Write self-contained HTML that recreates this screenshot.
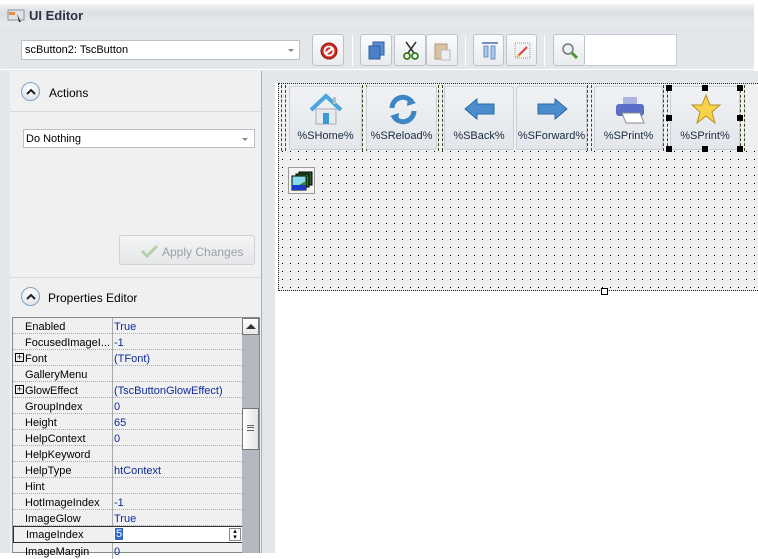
<!DOCTYPE html>
<html><head><meta charset="utf-8"><style>
*{box-sizing:border-box;margin:0;padding:0}
body{width:758px;height:558px;background:#fff;font-family:"Liberation Sans",Tahoma,sans-serif;font-size:11px;position:relative;overflow:hidden;color:#000}
.a{position:absolute}
.tb{left:0;top:4px;width:754px;height:549px;background:#e4e7ea}
.title{left:0;top:4px;width:754px;height:22px;background:linear-gradient(#f2f3f5,#dcdfe4 40%,#e8eaed);}
.combo{background:#fff;border:1px solid #b9c0c8}
.btn{border:1px solid #bcc3cb;border-radius:3px;background:linear-gradient(#fbfbfc,#e9ebee);}
.sep{width:1px;background:#c8cdd3;border-right:1px solid #fff}
.arr{width:0;height:0;border-left:3px solid transparent;border-right:3px solid transparent;border-top:3px solid #888}
.circ{width:19px;height:19px;border-radius:50%;border:1px solid #7fa3c6;background:radial-gradient(circle at 50% 30%,#fff,#d9dde2)}
.tbtn{top:86px;height:64px;border:1px solid #c9cfd6;border-radius:2px;background:linear-gradient(#f0f2f5,#e3e6ea);font-size:11px;text-align:center;color:#1a2a40}
.tbtn span{position:absolute;left:0;right:0;top:43px}
.dash{top:85px;width:5px;height:66px;border-left:1px dashed #3a4a20;border-right:1px dashed #3a4a20}
.row{left:13px;width:229px;height:16px;border-bottom:1px dotted #a8a8a8;font-size:11px}
.row .n{position:absolute;left:12px;top:3px}
.row .v{position:absolute;left:101px;top:3px;color:#0c2a9a}
.row .c{position:absolute;left:99px;top:0;width:1px;height:16px;background:#a8a8a8}
.plus{position:absolute;left:2px;top:3px;width:9px;height:9px;border:1px solid #000;font-size:9px;line-height:7px;text-align:center}
.h{width:6px;height:6px;background:#000}
</style></head><body>
<div class="a tb"></div>
<div class="a title"></div>
<svg class="a" style="left:7px;top:8px" width="20" height="16"><rect x="1" y="2" width="16" height="10" fill="#dfe3e8" stroke="#8a9099"/><rect x="2" y="4" width="6" height="3" fill="#f28a3a"/><path d="M10 6 L14 14 L12 14 Z" fill="#333"/></svg>
<div class="a" style="left:29px;top:8px;font-weight:bold;font-size:13px;color:#2b3340">UI Editor</div>

<div class="a combo" style="left:21px;top:40px;width:279px;height:20px"><div class="a" style="left:3px;top:3px">scButton2: TscButton</div><div class="a arr" style="left:266px;top:8px"></div></div>

<div class="a btn" style="left:312px;top:34px;width:32px;height:32px"><svg class="a" style="left:6px;top:6px" width="20" height="20"><circle cx="10" cy="10" r="8" fill="#d42b1e" stroke="#8a1a10"/><path d="M6 13 L14 7" stroke="#fff" stroke-width="2.5"/><circle cx="10" cy="10" r="4.5" fill="none" stroke="#fff" stroke-width="1.8"/></svg></div>
<div class="a sep" style="left:352px;top:36px;height:30px"></div>
<div class="a btn" style="left:360px;top:34px;width:32px;height:32px"><svg class="a" style="left:7px;top:6px" width="20" height="20"><rect x="5" y="1" width="11" height="13" fill="#5a8fd0" stroke="#2d5f9e"/><rect x="1" y="5" width="11" height="13" fill="#4a80c6" stroke="#2d5f9e"/></svg></div>
<div class="a btn" style="left:394px;top:34px;width:32px;height:32px"><svg class="a" style="left:6px;top:6px" width="20" height="20"><path d="M5 1 L13 12 M15 1 L7 12" stroke="#333" stroke-width="1.5"/><circle cx="6" cy="15" r="3" fill="none" stroke="#3a7d1a" stroke-width="1.8"/><circle cx="14" cy="15" r="3" fill="none" stroke="#3a7d1a" stroke-width="1.8"/></svg></div>
<div class="a btn" style="left:426px;top:34px;width:32px;height:32px"><svg class="a" style="left:6px;top:6px" width="20" height="20"><rect x="2" y="3" width="12" height="15" fill="#d8c4a4" stroke="#b09a7a"/><rect x="8" y="9" width="9" height="10" fill="#eee" stroke="#bbb"/></svg></div>
<div class="a sep" style="left:465px;top:36px;height:30px"></div>
<div class="a btn" style="left:473px;top:34px;width:31px;height:32px"><svg class="a" style="left:6px;top:6px" width="20" height="20"><path d="M2 2 H18" stroke="#4a6fb0" stroke-width="1.5"/><rect x="4" y="5" width="4" height="11" fill="#a8c8ec" stroke="#6a90c0"/><rect x="11" y="5" width="4" height="13" fill="#a8c8ec" stroke="#6a90c0"/></svg></div>
<div class="a btn" style="left:506px;top:34px;width:31px;height:32px"><svg class="a" style="left:6px;top:6px" width="20" height="20"><rect x="2" y="2" width="15" height="15" fill="#f2f2f2" stroke="#999" stroke-dasharray="1,1"/><path d="M5 15 L14 6" stroke="#e04040" stroke-width="2"/><path d="M4 16 L6 14" stroke="#f0c020" stroke-width="2"/></svg></div>
<div class="a sep" style="left:544px;top:36px;height:30px"></div>
<div class="a btn" style="left:553px;top:34px;width:32px;height:32px"><svg class="a" style="left:6px;top:6px" width="20" height="20"><circle cx="8" cy="8" r="5" fill="#eaf2fa" stroke="#777" stroke-width="1.5"/><path d="M12 12 L17 17" stroke="#4a9a2a" stroke-width="3"/></svg></div>
<div class="a" style="left:585px;top:34px;width:92px;height:32px;background:#fff;border:1px solid #c6ccd3;border-left:none"></div>
<div class="a" style="left:0;top:69px;width:754px;height:1px;background:#fff"></div>

<div class="a" style="left:10px;top:71px;width:252px;height:482px;background:#f0f0f0;border-right:1px solid #a8b0ba"></div>
<div class="a circ" style="left:21px;top:82px"><svg class="a" style="left:4px;top:5px" width="10" height="7"><path d="M1 6 L5 2 L9 6" fill="none" stroke="#222" stroke-width="2"/></svg></div>
<div class="a" style="left:49px;top:86px;font-size:12px">Actions</div>
<div class="a" style="left:10px;top:111px;width:251px;height:1px;background:#d6d9dd"></div>
<div class="a combo" style="left:23px;top:129px;width:232px;height:19px"><div class="a" style="left:2px;top:3px;font-size:11px">Do Nothing</div><div class="a arr" style="left:218px;top:8px"></div></div>
<div class="a" style="left:119px;top:235px;width:136px;height:30px;border:1px solid #cfd3d8;border-radius:3px;background:linear-gradient(#f4f4f5,#e6e7e9)"><svg class="a" style="left:21px;top:8px" width="18" height="14"><path d="M1 7 L6 12 L16 2" fill="none" stroke="#b5d3a8" stroke-width="3"/></svg><div class="a" style="left:42px;top:9px;font-size:12px;color:#9aa0a6">Apply Changes</div></div>
<div class="a" style="left:10px;top:277px;width:251px;height:1px;background:#d6d9dd"></div>
<div class="a circ" style="left:21px;top:287px"><svg class="a" style="left:4px;top:5px" width="10" height="7"><path d="M1 6 L5 2 L9 6" fill="none" stroke="#222" stroke-width="2"/></svg></div>
<div class="a" style="left:48px;top:291px;font-size:12px">Properties Editor</div>

<div class="a" style="left:12px;top:317px;width:248px;height:236px;border:1px solid #8a8a8a;background:#f0f0f0"></div>
<div class="a row" style="top:318px"><span class="n">Enabled</span><span class="c"></span><span class="v">True</span></div>
<div class="a row" style="top:334px"><span class="n">FocusedImageI...</span><span class="c"></span><span class="v">-1</span></div>
<div class="a row" style="top:350px"><span class="plus">+</span><span class="n">Font</span><span class="c"></span><span class="v">(TFont)</span></div>
<div class="a row" style="top:366px"><span class="n">GalleryMenu</span><span class="c"></span></div>
<div class="a row" style="top:382px"><span class="plus">+</span><span class="n">GlowEffect</span><span class="c"></span><span class="v">(TscButtonGlowEffect)</span></div>
<div class="a row" style="top:398px"><span class="n">GroupIndex</span><span class="c"></span><span class="v">0</span></div>
<div class="a row" style="top:414px"><span class="n">Height</span><span class="c"></span><span class="v">65</span></div>
<div class="a row" style="top:430px"><span class="n">HelpContext</span><span class="c"></span><span class="v">0</span></div>
<div class="a row" style="top:446px"><span class="n">HelpKeyword</span><span class="c"></span></div>
<div class="a row" style="top:462px"><span class="n">HelpType</span><span class="c"></span><span class="v">htContext</span></div>
<div class="a row" style="top:478px"><span class="n">Hint</span><span class="c"></span></div>
<div class="a row" style="top:494px"><span class="n">HotImageIndex</span><span class="c"></span><span class="v">-1</span></div>
<div class="a row" style="top:510px"><span class="n">ImageGlow</span><span class="c"></span><span class="v">True</span></div>
<div class="a row" style="top:526px;border:1px solid #333;border-bottom:1px solid #333;height:17px"><span class="n" style="top:2px">ImageIndex</span><div class="a" style="left:100px;top:0;width:128px;height:15px;background:#fff"></div><span class="a" style="left:101px;top:1px;background:#3169c6;color:#fff;padding:0 1px">5</span><div class="a" style="left:215px;top:1px;width:12px;height:13px;border:1px solid #888;font-size:7px;line-height:6px;text-align:center">▴<br>▾</div></div>
<div class="a row" style="top:543px;border:none"><span class="n">ImageMargin</span><span class="c"></span><span class="v">0</span></div>
<div class="a" style="left:242px;top:318px;width:17px;height:235px;background:#b4b8c2"></div>
<div class="a" style="left:242px;top:318px;width:17px;height:17px;background:linear-gradient(#fff,#e8e8e8);border:1px solid #777"><div class="a" style="left:3px;top:5px;border-left:5px solid transparent;border-right:5px solid transparent;border-bottom:5px solid #333"></div></div>
<div class="a" style="left:242px;top:408px;width:17px;height:42px;background:linear-gradient(90deg,#fff,#e2e2e2);border:1px solid #777"><div class="a" style="left:4px;top:16px;width:7px;height:6px;border-top:1px solid #666;border-bottom:1px solid #666"></div><div class="a" style="left:4px;top:18px;width:7px;height:1px;background:#666"></div></div>

<div class="a" style="left:275px;top:71px;width:483px;height:12px;background:#e4e7ea"></div>
<div class="a" style="left:275px;top:83px;width:483px;height:475px;background:#fff"></div>
<div class="a" style="left:278px;top:83px;width:480px;height:208px;background-color:#f0f0f0;background-image:linear-gradient(#f0f0f0,#f0f0f0);border:1px dotted #222;border-right:none"></div>
<svg class="a" style="left:279px;top:84px" width="479" height="206"><defs><pattern id="d" width="8" height="8" patternUnits="userSpaceOnUse"><rect x="3" y="3" width="1" height="1" fill="#000"/></pattern></defs><rect width="479" height="206" fill="url(#d)"/></svg>
<div class="a" style="left:279px;top:84px;width:479px;height:67px;background:#f0f0f0"></div>
<div class="a dash" style="left:281px"></div>
<div class="a dash" style="left:362px"></div>
<div class="a dash" style="left:438px"></div>
<div class="a dash" style="left:587px"></div>
<div class="a dash" style="left:663px"></div>
<div class="a dash" style="left:740px"></div>
<div class="a tbtn" style="left:289px;width:73px"><svg class="a" style="left:18px;top:6px" width="36" height="34"><path d="M3 17 L18 3 L33 17" fill="none" stroke="#4aa6dc" stroke-width="4"/><rect x="8" y="16" width="20" height="15" fill="#e8eaee" stroke="#aab"/><rect x="15" y="20" width="6" height="11" fill="#3a9ad8"/><rect x="25" y="4" width="3" height="7" fill="#bbb"/></svg><span>%SHome%</span></div>
<div class="a tbtn" style="left:366px;width:71px"><svg class="a" style="left:20px;top:6px" width="32" height="32"><path d="M5 15 A11 11 0 0 1 25 9" fill="none" stroke="#3d86c6" stroke-width="5"/><path d="M21 3 L29 10 L20 13 Z" fill="#3d86c6"/><path d="M27 18 A11 11 0 0 1 7 24" fill="none" stroke="#3d86c6" stroke-width="5"/><path d="M11 30 L3 23 L12 20 Z" fill="#3d86c6"/></svg><span>%SReload%</span></div>
<div class="a tbtn" style="left:444px;width:70px"><svg class="a" style="left:18px;top:10px" width="34" height="24"><path d="M2 12 L14 2 L14 7 L31 7 L31 17 L14 17 L14 22 Z" fill="#4b8ccc" stroke="#2a6aa8"/></svg><span>%SBack%</span></div>
<div class="a tbtn" style="left:516px;width:71px"><svg class="a" style="left:18px;top:10px" width="34" height="24"><path d="M32 12 L20 2 L20 7 L3 7 L3 17 L20 17 L20 22 Z" fill="#4b8ccc" stroke="#2a6aa8"/></svg><span>%SForward%</span></div>
<div class="a tbtn" style="left:594px;width:69px"><svg class="a" style="left:18px;top:8px" width="34" height="30"><rect x="10" y="2" width="14" height="8" fill="#aab6e0"/><rect x="3" y="9" width="28" height="12" rx="3" fill="#5a70c8"/><path d="M9 18 L27 18 L31 28 L13 28 Z" fill="#fff" stroke="#888"/></svg><span>%SPrint%</span></div>
<div class="a tbtn" style="left:670px;width:70px"><svg class="a" style="left:19px;top:6px" width="32" height="32"><path d="M16 2 L20 12 L30 12 L22 19 L25 30 L16 23 L7 30 L10 19 L2 12 L12 12 Z" fill="#f8d24a" stroke="#b89020"/></svg><span>%SPrint%</span></div>
<div class="a h" style="left:666px;top:85px"></div><div class="a h" style="left:702px;top:85px"></div><div class="a h" style="left:737px;top:85px"></div>
<div class="a h" style="left:666px;top:115px"></div><div class="a h" style="left:737px;top:115px"></div>
<div class="a h" style="left:666px;top:146px"></div><div class="a h" style="left:702px;top:146px"></div><div class="a h" style="left:737px;top:146px"></div>
<div class="a" style="left:288px;top:167px;width:27px;height:27px;border:1px solid #999;background:#f4f4f4"><svg class="a" style="left:2px;top:2px" width="22" height="22"><rect x="8" y="2" width="13" height="13" fill="#2a5a2a" stroke="#000"/><rect x="5" y="4" width="13" height="13" fill="#2a7a2a" stroke="#000"/><rect x="1" y="6" width="14" height="14" fill="#8adcec" stroke="#000"/><rect x="1" y="15" width="14" height="5" fill="#1a3acc"/><path d="M8 15 L15 11 L15 15Z" fill="#2a8a2a"/></svg></div>
<div class="a" style="left:601px;top:288px;width:7px;height:7px;border:1px solid #000;background:#fff"></div>
</body></html>
